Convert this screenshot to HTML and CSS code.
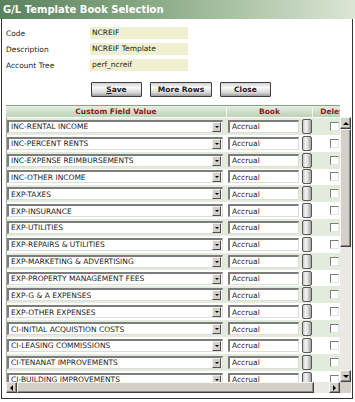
FILE: index.html
```html
<!DOCTYPE html>
<html lang="en">
<head>
    <meta charset="UTF-8">
    <title>G/L Template Book Selection</title>
    <link rel="stylesheet" href="styles.css">
</head>
<body>
    <div class="titlebar">G/L Template Book Selection</div>
    <div class="frame">
        <!-- template fields -->
        <div class="form">
            <div class="field"><span class="label">Code</span><span class="value">NCREIF</span></div>
            <div class="field"><span class="label">Description</span><span class="value">NCREIF Template</span></div>
            <div class="field"><span class="label">Account Tree</span><span class="value">perf_ncreif</span></div>
        </div>
        <div class="buttons">
            <button class="btn save"><u>S</u>ave</button>
            <button class="btn more">More Rows</button>
            <button class="btn close">Close</button>
        </div>

        <!-- book grid -->
        <div class="grid-box">
            <div class="grid-head">
                <div class="cols">
                    <div class="hcell">Custom Field Value</div>
                    <div class="hcell">Book</div>
                    <div class="hcell">Delete</div>
                </div>
            </div>
            <div class="grid-body">
                <div class="viewport">
                    <div class="row"><div class="c1"><div class="select"><span>INC-RENTAL INCOME</span><i class="drop"></i></div></div><div class="c2"><div class="text">Accrual</div><span class="pick"></span></div><div class="c3"><span class="check"></span></div></div>
                    <div class="row"><div class="c1"><div class="select"><span>INC-PERCENT RENTS</span><i class="drop"></i></div></div><div class="c2"><div class="text">Accrual</div><span class="pick"></span></div><div class="c3"><span class="check"></span></div></div>
                    <div class="row"><div class="c1"><div class="select"><span>INC-EXPENSE REIMBURSEMENTS</span><i class="drop"></i></div></div><div class="c2"><div class="text">Accrual</div><span class="pick"></span></div><div class="c3"><span class="check"></span></div></div>
                    <div class="row"><div class="c1"><div class="select"><span>INC-OTHER INCOME</span><i class="drop"></i></div></div><div class="c2"><div class="text">Accrual</div><span class="pick"></span></div><div class="c3"><span class="check"></span></div></div>
                    <div class="row"><div class="c1"><div class="select"><span>EXP-TAXES</span><i class="drop"></i></div></div><div class="c2"><div class="text">Accrual</div><span class="pick"></span></div><div class="c3"><span class="check"></span></div></div>
                    <div class="row"><div class="c1"><div class="select"><span>EXP-INSURANCE</span><i class="drop"></i></div></div><div class="c2"><div class="text">Accrual</div><span class="pick"></span></div><div class="c3"><span class="check"></span></div></div>
                    <div class="row"><div class="c1"><div class="select"><span>EXP-UTILITIES</span><i class="drop"></i></div></div><div class="c2"><div class="text">Accrual</div><span class="pick"></span></div><div class="c3"><span class="check"></span></div></div>
                    <div class="row"><div class="c1"><div class="select"><span>EXP-REPAIRS &amp; UTILITIES</span><i class="drop"></i></div></div><div class="c2"><div class="text">Accrual</div><span class="pick"></span></div><div class="c3"><span class="check"></span></div></div>
                    <div class="row"><div class="c1"><div class="select"><span>EXP-MARKETING &amp; ADVERTISING</span><i class="drop"></i></div></div><div class="c2"><div class="text">Accrual</div><span class="pick"></span></div><div class="c3"><span class="check"></span></div></div>
                    <div class="row"><div class="c1"><div class="select"><span>EXP-PROPERTY MANAGEMENT FEES</span><i class="drop"></i></div></div><div class="c2"><div class="text">Accrual</div><span class="pick"></span></div><div class="c3"><span class="check"></span></div></div>
                    <div class="row"><div class="c1"><div class="select"><span>EXP-G &amp; A EXPENSES</span><i class="drop"></i></div></div><div class="c2"><div class="text">Accrual</div><span class="pick"></span></div><div class="c3"><span class="check"></span></div></div>
                    <div class="row"><div class="c1"><div class="select"><span>EXP-OTHER EXPENSES</span><i class="drop"></i></div></div><div class="c2"><div class="text">Accrual</div><span class="pick"></span></div><div class="c3"><span class="check"></span></div></div>
                    <div class="row"><div class="c1"><div class="select"><span>CI-INITIAL ACQUISTION COSTS</span><i class="drop"></i></div></div><div class="c2"><div class="text">Accrual</div><span class="pick"></span></div><div class="c3"><span class="check"></span></div></div>
                    <div class="row"><div class="c1"><div class="select"><span>CI-LEASING COMMISSIONS</span><i class="drop"></i></div></div><div class="c2"><div class="text">Accrual</div><span class="pick"></span></div><div class="c3"><span class="check"></span></div></div>
                    <div class="row"><div class="c1"><div class="select"><span>CI-TENANAT IMPROVEMENTS</span><i class="drop"></i></div></div><div class="c2"><div class="text">Accrual</div><span class="pick"></span></div><div class="c3"><span class="check"></span></div></div>
                    <div class="row"><div class="c1"><div class="select"><span>CI-BUILDING IMPROVEMENTS</span><i class="drop"></i></div></div><div class="c2"><div class="text">Accrual</div><span class="pick"></span></div><div class="c3"><span class="check"></span></div></div>
                </div>
                <div class="vscroll">
                    <span class="sbtn"><i class="arrow up"></i></span>
                    <span class="thumb"></span>
                    <span class="track"></span>
                    <span class="sbtn"><i class="arrow down"></i></span>
                </div>
                <div class="hscroll">
                    <span class="sbtn"><i class="arrow left"></i></span>
                    <span class="thumb"></span>
                    <span class="track"></span>
                    <span class="sbtn"><i class="arrow right"></i></span>
                </div>
                <div class="corner"></div>
            </div>
        </div>
    </div>
</body>
</html>
```

FILE: styles.css
```css
/* page */
body {
    margin: 0;
    width: 355px;
    height: 402px;
    overflow: hidden;
    font-family: "DejaVu Sans", Verdana, sans-serif;
    font-size: 7.5px;
    color: #222;
    background: #fff;
}

.titlebar {
    height: 19px;
    line-height: 19px;
    padding-left: 3px;
    font-size: 10px;
    font-weight: bold;
    color: #fff;
    background: linear-gradient(to right, #58825c, #8dac88 45%, #dbe6d5);
}

.frame {
    margin-left: 1px;
    width: 350px;
    height: 379px;
    border: 1px solid #333;
    border-top: none;
}

/* form */
.form {
    padding: 8px 0 0 4px;
}

.field {
    display: grid;
    grid-template-columns: 84px 98px;
    align-items: center;
    height: 12px;
    margin-bottom: 4px;
}

.value {
    height: 12px;
    line-height: 12px;
    padding-left: 2px;
    background: #f0efd2;
}

.buttons {
    display: flex;
    gap: 8px;
    padding-left: 89px;
    margin-top: 11px;
}

.btn {
    height: 15px;
    padding: 0;
    font-family: inherit;
    font-size: 7.5px;
    font-weight: bold;
    color: #222;
    border: 1px solid #3c3c3c;
    border-radius: 1px;
    background: linear-gradient(#d0d0d0, #fafafa 35%, #d6d6d6 75%, #9c9c9c);
}

.save, .close { width: 51px; }
.more { width: 62px; }

/* grid */
.grid-box {
    margin: 8px 0 0 4px;
    width: 345px;
}

.grid-head {
    width: 334px;
    height: 11px;
    overflow: hidden;
    border-top: 1px solid #86a383;
}

.cols {
    display: grid;
    grid-template-columns: 221px 86px 43px;
    width: 350px;
    height: 11px;
    background: linear-gradient(#e6eee2, #bcd1b6);
}

.hcell {
    line-height: 11px;
    text-align: center;
    font-weight: bold;
    color: #8e1b1b;
    border-right: 1px solid #f1f5ef;
}

.grid-body {
    display: grid;
    grid-template-columns: 334px 11px;
    grid-template-rows: 265px 11px;
}

.viewport {
    overflow: hidden;
    padding-top: 1px;
    border-left: 1px solid #a3b0a0;
}

.row {
    display: grid;
    grid-template-columns: 220px 86px 43px;
    align-items: center;
    width: 349px;
    height: 16.85px;
}

.row:nth-child(odd) {
    background: #e3ebdd;
}

.c1, .c2, .c3 {
    display: flex;
    align-items: center;
}

.select, .text {
    display: flex;
    align-items: center;
    height: 13px;
    box-sizing: border-box;
    background: #fff;
    border-style: solid;
    border-width: 2px 1px 1px 2px;
    border-color: #7c7c7c #dcdcdc #dcdcdc #7c7c7c;
}

.select {
    width: 216px;
}

.select span, .text {
    flex: 1;
    padding-left: 2px;
    white-space: nowrap;
    color: #222;
}

.drop {
    display: flex;
    justify-content: center;
    align-items: center;
    width: 7px;
    height: 8px;
    margin-right: 1px;
    background: #d4d0c8;
    border: 1px solid;
    border-color: #f4f4f4 #505050 #505050 #f4f4f4;
}

.drop::after {
    content: "";
    border-left: 2px solid transparent;
    border-right: 2px solid transparent;
    border-top: 2px solid #000;
}

.c2 {
    padding-left: 1px;
}

.text {
    flex: none;
    width: 71px;
}

.pick {
    width: 10px;
    height: 15px;
    margin-left: 3px;
    box-sizing: border-box;
    border: 1px solid #5a5a5a;
    border-radius: 2px;
    background: linear-gradient(to right, #c4c4c4, #f6f6f6 35%, #cfcfcf 70%, #9a9a9a);
}

.c3 {
    padding-left: 17px;
}

.check {
    width: 9px;
    height: 9px;
    box-sizing: border-box;
    background: #fff;
    border-style: solid;
    border-width: 1px;
    border-color: #7c7c7c #e4e4e4 #e4e4e4 #7c7c7c;
}

/* scrollbars */
.vscroll, .hscroll {
    display: flex;
    background: #ece9e4;
}

.vscroll {
    flex-direction: column;
}

.sbtn, .thumb {
    display: flex;
    justify-content: center;
    align-items: center;
    box-sizing: border-box;
    background: #d4d0c8;
    border: 1px solid;
    border-color: #f6f6f6 #404040 #404040 #f6f6f6;
    box-shadow: inset -1px -1px #8c8a86;
}

.vscroll .sbtn { height: 12px; }
.hscroll .sbtn { width: 11px; }

.vscroll .thumb { height: 118px; }
.hscroll .thumb { width: 297px; }

.track { flex: 1; }

.arrow {
    width: 0;
    height: 0;
}

.up {
    border-left: 3px solid transparent;
    border-right: 3px solid transparent;
    border-bottom: 3px solid #000;
}

.down {
    border-left: 3px solid transparent;
    border-right: 3px solid transparent;
    border-top: 3px solid #000;
}

.left {
    border-top: 3px solid transparent;
    border-bottom: 3px solid transparent;
    border-right: 3px solid #000;
}

.right {
    border-top: 3px solid transparent;
    border-bottom: 3px solid transparent;
    border-left: 3px solid #000;
}

.corner {
    background: #d4d0c8;
}
```
